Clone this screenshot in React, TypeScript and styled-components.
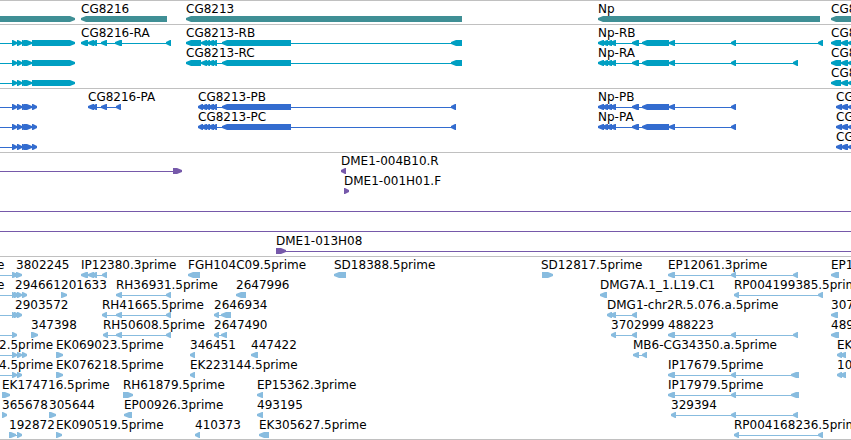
import React from "react";
import styled, { createGlobalStyle } from "styled-components";

type Strand = "+" | "-";
type Span = [number, number];

interface Feature {
  label?: string;
  strand: Strand;
  exons: Span[];
  /** Extent of the connecting line, when it runs past the outer exons. */
  span?: Span;
  /** Label position, when it differs from the feature start. */
  labelAt?: number;
}

interface TrackData {
  name: string;
  color: string;
  lanes: Feature[][];
}

const FAR = 4000;

const fwd = (label: string | undefined, exons: Span[], span?: Span, labelAt?: number): Feature => ({
  label, strand: "+", exons, span, labelAt,
});
const rev = (label: string | undefined, exons: Span[], span?: Span, labelAt?: number): Feature => ({
  label, strand: "-", exons, span, labelAt,
});

const leftCoding: Span[] = [[12, 17], [17, 22], [22, 28], [24, 32]];
const smallExons: Span[] = [[201, 207], [205, 210], [208, 214], [212, 217]];
const npCommon: Span[] = [
  [598, 604], [602, 608], [606, 612], [610, 616], [632, 639], [642, 669], [669, 675], [731, 736],
];
const edgeExons: Span[] = [[831, 841], [841, 848], [848, 860]];
const edgeCoding: Span[] = [[836, 842], [841, 848], [848, 860]];
const npEst: Span[] = [[668, 675], [731, 736], [793, 798]];
const npEstWide: Span[] = [[668, 675], [731, 736], [791, 799]];

const leftTranscript = fwd(undefined, [...leftCoding, [32, 75]], [-8, 75]);
const leftProtein = fwd(undefined, [...leftCoding, [32, 37]], [-8, 37]);
const cg8213Rna: Span[] = [[186, 201], ...smallExons, [222, 291], [451, 462]];
const cg8213Cds: Span[] = [[198, 203], ...smallExons, [222, 291], [451, 456]];

const tracks: TrackData[] = [
  {
    name: "Genes",
    color: "#3f8f95",
    lanes: [
      [
        fwd(undefined, [[-8, 75]]),
        rev("CG8216", [[81, 167]]),
        rev("CG8213", [[186, 462]]),
        rev("Np", [[598, 820]]),
        rev("CG8", [[831, 880]]),
      ],
    ],
  },
  {
    name: "Transcripts",
    color: "#009fc2",
    lanes: [
      [
        leftTranscript,
        rev("CG8216-RA", [[81, 88], [88, 94], [91, 97], [101, 107], [115, 122], [166, 171]]),
        rev("CG8213-RB", cg8213Rna),
        rev("Np-RB", [...npCommon, [818, 823]]),
        rev("CG8", edgeExons),
      ],
      [
        leftTranscript,
        rev("CG8213-RC", cg8213Rna),
        rev("Np-RA", [...npCommon, [793, 798]]),
        rev("CG8", edgeExons),
      ],
      [leftTranscript, rev("CG8", edgeExons)],
    ],
  },
  {
    name: "Proteins",
    color: "#336ccf",
    lanes: [
      [
        leftProtein,
        rev("CG8216-PA", [[88, 94], [91, 97], [101, 107], [116, 121]]),
        rev("CG8213-PB", cg8213Cds),
        rev("Np-PB", npCommon),
        rev("CG", edgeCoding),
      ],
      [leftProtein, rev("CG8213-PC", cg8213Cds), rev("Np-PA", npCommon), rev("CG", edgeCoding)],
      [leftProtein, rev("CG", edgeCoding)],
    ],
  },
  {
    name: "Clones",
    color: "#7659aa",
    lanes: [
      [fwd(undefined, [[173, 182]], [-8, 182]), rev("DME1-004B10.R", [[341, 346]])],
      [fwd("DME1-001H01.F", [[344, 349]])],
      [fwd(undefined, [], [-8, FAR])],
      [fwd(undefined, [], [-8, FAR])],
      [fwd("DME1-013H08", [[276, 286]], [276, FAR])],
    ],
  },
  {
    name: "ESTs",
    color: "#88bcdf",
    lanes: [
      [
        fwd("e", [[12, 18]], [-3, 17]),
        fwd("3802245", [[16, 22]]),
        rev("IP12380.3prime", [[81, 88], [88, 94], [91, 97], [102, 107]]),
        rev("FGH104C09.5prime", [[188, 200]]),
        rev("SD18388.5prime", [[334, 346]]),
        fwd("SD12817.5prime", [[542, 553]], undefined, 541),
        rev("EP12061.3prime", npEst),
        rev("EP1", [[831, 839]]),
      ],
      [
        fwd("e", [[12, 16], [14, 19], [17, 22]], [-3, 22]),
        fwd("294661", [[22, 27]], undefined, 15),
        fwd("201633", [[61, 67]]),
        rev("RH36931.5prime", [[116, 122], [166, 171]]),
        rev("2647996", [[236, 246]]),
        rev("DMG7A.1_1.L19.C1", [[600, 607]]),
        rev("RP004199385.5prime", [[734, 739], [818, 823]]),
      ],
      [
        fwd("2903572", [[12, 16], [14, 19], [17, 22]], [-8, 22], 15),
        rev("RH41665.5prime", [[102, 107], [116, 122], [166, 171]]),
        rev("2646934", [[214, 219], [221, 231]]),
        rev("DMG1-chr2R.5.076.a.5prime", [[607, 612], [610, 616], [632, 637]]),
        rev("307", [[831, 838]]),
      ],
      [
        fwd(undefined, [[12, 17]], [-8, 17]),
        fwd("347398", [[31, 38]]),
        rev("RH50608.5prime", [[103, 108], [116, 122], [166, 171]]),
        rev("2647490", [[214, 219], [221, 227]]),
        rev("3702999", [[611, 616], [632, 637]]),
        rev("488223", npEst),
        rev("489", [[831, 839]]),
      ],
      [
        fwd("2.5prime", [[12, 17], [17, 22], [22, 27]], [-1, 27]),
        fwd("EK069023.5prime", [[56, 63]]),
        rev("346451", [[190, 195]]),
        rev("447422", [[251, 258]]),
        rev("MB6-CG34350.a.5prime", [[633, 639], [642, 647]]),
        rev("EK", [[837, 842], [840, 846]]),
      ],
      [
        fwd("4.5prime", [[12, 17], [17, 22]], [-1, 22]),
        fwd("EK076218.5prime", [[56, 63]]),
        rev("EK223144.5prime", [[190, 195]]),
        rev("IP17679.5prime", npEstWide),
        rev("10", [[837, 842], [840, 846]]),
      ],
      [
        fwd("EK174716.5prime", [[2, 10]]),
        fwd("RH61879.5prime", [[123, 133]]),
        rev("EP15362.3prime", [[257, 263]]),
        rev("IP17979.5prime", npEstWide),
      ],
      [
        fwd("365678", [[2, 7]]),
        fwd("305644", [[49, 56]]),
        rev("EP00926.3prime", [[124, 132]]),
        rev("493195", [[257, 263]]),
        rev("329394", [[671, 676], [731, 736], [793, 798]]),
      ],
      [
        fwd("192872", [[9, 16], [17, 22]]),
        fwd("EK090519.5prime", [[56, 62]]),
        rev("410373", [[195, 200]]),
        rev("EK305627.5prime", [[259, 269]]),
        rev("RP004168236.5prime", [[734, 739], [818, 823]]),
      ],
    ],
  },
];

const GlobalStyle = createGlobalStyle`
  body {
    margin: 0;
    background: #ffffff;
    overflow-x: hidden;
  }
`;

const Browser = styled.main`
  border-bottom: 1px solid #c0c0c0;
  font-family: "DejaVu Sans", sans-serif;
  font-size: 12px;
  line-height: 14px;
  color: #000000;
`;

const Track = styled.section<{ $color: string }>`
  border-top: 1px solid #c0c0c0;
  padding: 1px 0 2px;
  color: ${(p) => p.$color};

  &:last-child {
    padding-bottom: 1px;
  }
`;

const Lane = styled.div`
  position: relative;
  height: 20px;
  overflow: hidden;
`;

const FeatureBox = styled.div<{ $x: number }>`
  position: absolute;
  bottom: 0;
  left: ${(p) => p.$x}px;
`;

const Label = styled.span<{ $shift: number }>`
  display: block;
  margin-left: ${(p) => p.$shift}px;
  color: #000000;
  white-space: nowrap;
`;

const Glyph = styled.svg`
  display: block;
  height: 6px;
  fill: currentColor;
`;

function exonPoints(a: number, b: number, strand: Strand): string {
  const head = Math.min(5, b - a - 1);
  return strand === "-"
    ? `${a},2 ${a + head},0 ${b},0 ${b},6 ${a + head},6 ${a},4`
    : `${b},2 ${b - head},0 ${a},0 ${a},6 ${b - head},6 ${b},4`;
}

function FeatureView({ feature }: { feature: Feature }) {
  const { exons, strand, label, labelAt } = feature;
  const [start, end] = feature.span ?? [exons[0][0], exons[exons.length - 1][1]];
  const width = end - start;
  return (
    <FeatureBox $x={start}>
      {label && <Label $shift={(labelAt ?? start) - start}>{label}</Label>}
      <Glyph width={width} height={6} aria-hidden="true">
        <rect x={strand === "-" ? 2 : 0} y={3} width={width - 2} height={1} />
        {exons.map(([a, b]) => (
          <polygon key={a} points={exonPoints(a - start, b - start, strand)} />
        ))}
      </Glyph>
    </FeatureBox>
  );
}

export default function App() {
  return (
    <>
      <GlobalStyle />
      <Browser>
        {tracks.map((track) => (
          <Track key={track.name} $color={track.color} aria-label={track.name}>
            {track.lanes.map((lane, i) => (
              <Lane key={i}>
                {lane.map((feature, j) => (
                  <FeatureView key={j} feature={feature} />
                ))}
              </Lane>
            ))}
          </Track>
        ))}
      </Browser>
    </>
  );
}
